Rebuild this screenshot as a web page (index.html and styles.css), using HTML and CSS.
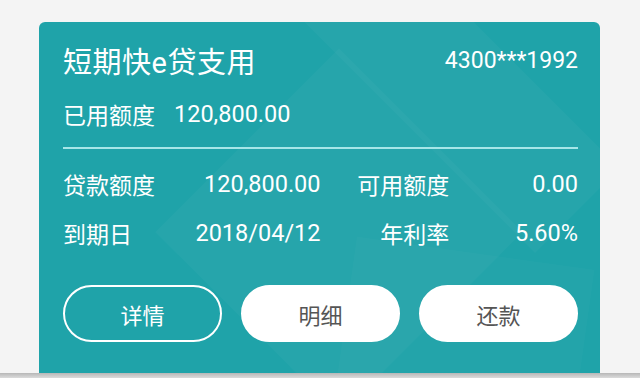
FILE: index.html
```html
<!DOCTYPE html>
<html lang="zh-CN">
<head>
    <meta charset="UTF-8">
    <meta name="viewport" content="width=device-width, initial-scale=1.0">
    <title>短期快e贷支用</title>
    <link rel="stylesheet" href="styles.css">
</head>
<body>
    <div class="card">
        <div class="deco deco-a"></div>
        <div class="deco deco-b"></div>
        <div class="deco deco-c"></div>
        <div class="head">
            <h1>短期快e贷支用</h1>
            <span class="acct">4300***1992</span>
        </div>
        <div class="used">
            <span>已用额度</span>
            <span class="num">120,800.00</span>
        </div>
        <div class="line"></div>
        <div class="info">
            <span class="lbl">贷款额度</span>
            <span class="num val">120,800.00</span>
            <span class="lbl right">可用额度</span>
            <span class="num val">0.00</span>
            <span class="lbl">到期日</span>
            <span class="num val">2018/04/12</span>
            <span class="lbl right">年利率</span>
            <span class="num val">5.60%</span>
        </div>
        <div class="actions">
            <button class="btn ghost">详情</button>
            <button class="btn">明细</button>
            <button class="btn">还款</button>
        </div>
    </div>
    <div class="shade"></div>
</body>
</html>
```
FILE: styles.css
```css
body {
    margin: 0px;
    padding: 22px 40px 0px 39px;
    height: 378px;
    box-sizing: border-box;
    overflow: hidden;
    background-color: #f4f4f4;
    font-family: Roboto, "Noto Sans CJK SC", sans-serif;
    color: white;
    position: relative;
}

.card {
    position: relative;
    overflow: hidden;
    height: 351px;
    box-sizing: border-box;
    padding: 20px 22px 0px 24px;
    background-color: #1fa3a9;
    border-radius: 6px 6px 0px 0px;
}

.deco {
    position: absolute;
    background-color: rgba(255, 255, 255, 0.03);
    transform: rotate(45deg);
}

.deco-a {
    width: 260px;
    height: 260px;
    left: 170px;
    top: 80px;
}

.deco-b {
    width: 120px;
    height: 420px;
    left: 330px;
    top: -170px;
    transform: rotate(-45deg);
}

.deco-c {
    width: 240px;
    height: 240px;
    left: 300px;
    top: 230px;
    transform: rotate(8deg);
    background-color: rgba(255, 255, 255, 0.02);
}

.head {
    position: relative;
    display: flex;
    justify-content: space-between;
    align-items: center;
    height: 36px;
}

h1 {
    margin: 0px;
    font-size: 29px;
    font-weight: normal;
    letter-spacing: 0.5px;
}

.acct {
    font-size: 23px;
}

.used {
    position: relative;
    display: flex;
    gap: 19px;
    align-items: center;
    height: 30px;
    margin-top: 21px;
    font-size: 23px;
}

.line {
    position: relative;
    height: 2px;
    margin-top: 18px;
    background-color: #a6e6e8;
}

.info {
    position: relative;
    display: grid;
    grid-template-columns: 1fr 1fr 1fr 1fr;
    grid-auto-rows: 30px;
    row-gap: 19px;
    align-items: center;
    margin-top: 20px;
    font-size: 23px;
}

.lbl.right,
.val {
    text-align: right;
    white-space: nowrap;
}

.num {
    font-size: 23.5px;
}

.actions {
    position: relative;
    display: flex;
    gap: 19px;
    margin-top: 37px;
}

.btn {
    flex: 1;
    height: 57px;
    border: 2px solid white;
    border-radius: 29px;
    background-color: white;
    color: #555555;
    font-family: Roboto, "Noto Sans CJK SC", sans-serif;
    font-size: 22px;
}

.btn.ghost {
    background-color: transparent;
    color: white;
}

.shade {
    position: absolute;
    left: 0px;
    right: 0px;
    bottom: 0px;
    height: 5px;
    background: linear-gradient(rgba(0, 0, 0, 0.25), rgba(0, 0, 0, 0.1));
}
```
